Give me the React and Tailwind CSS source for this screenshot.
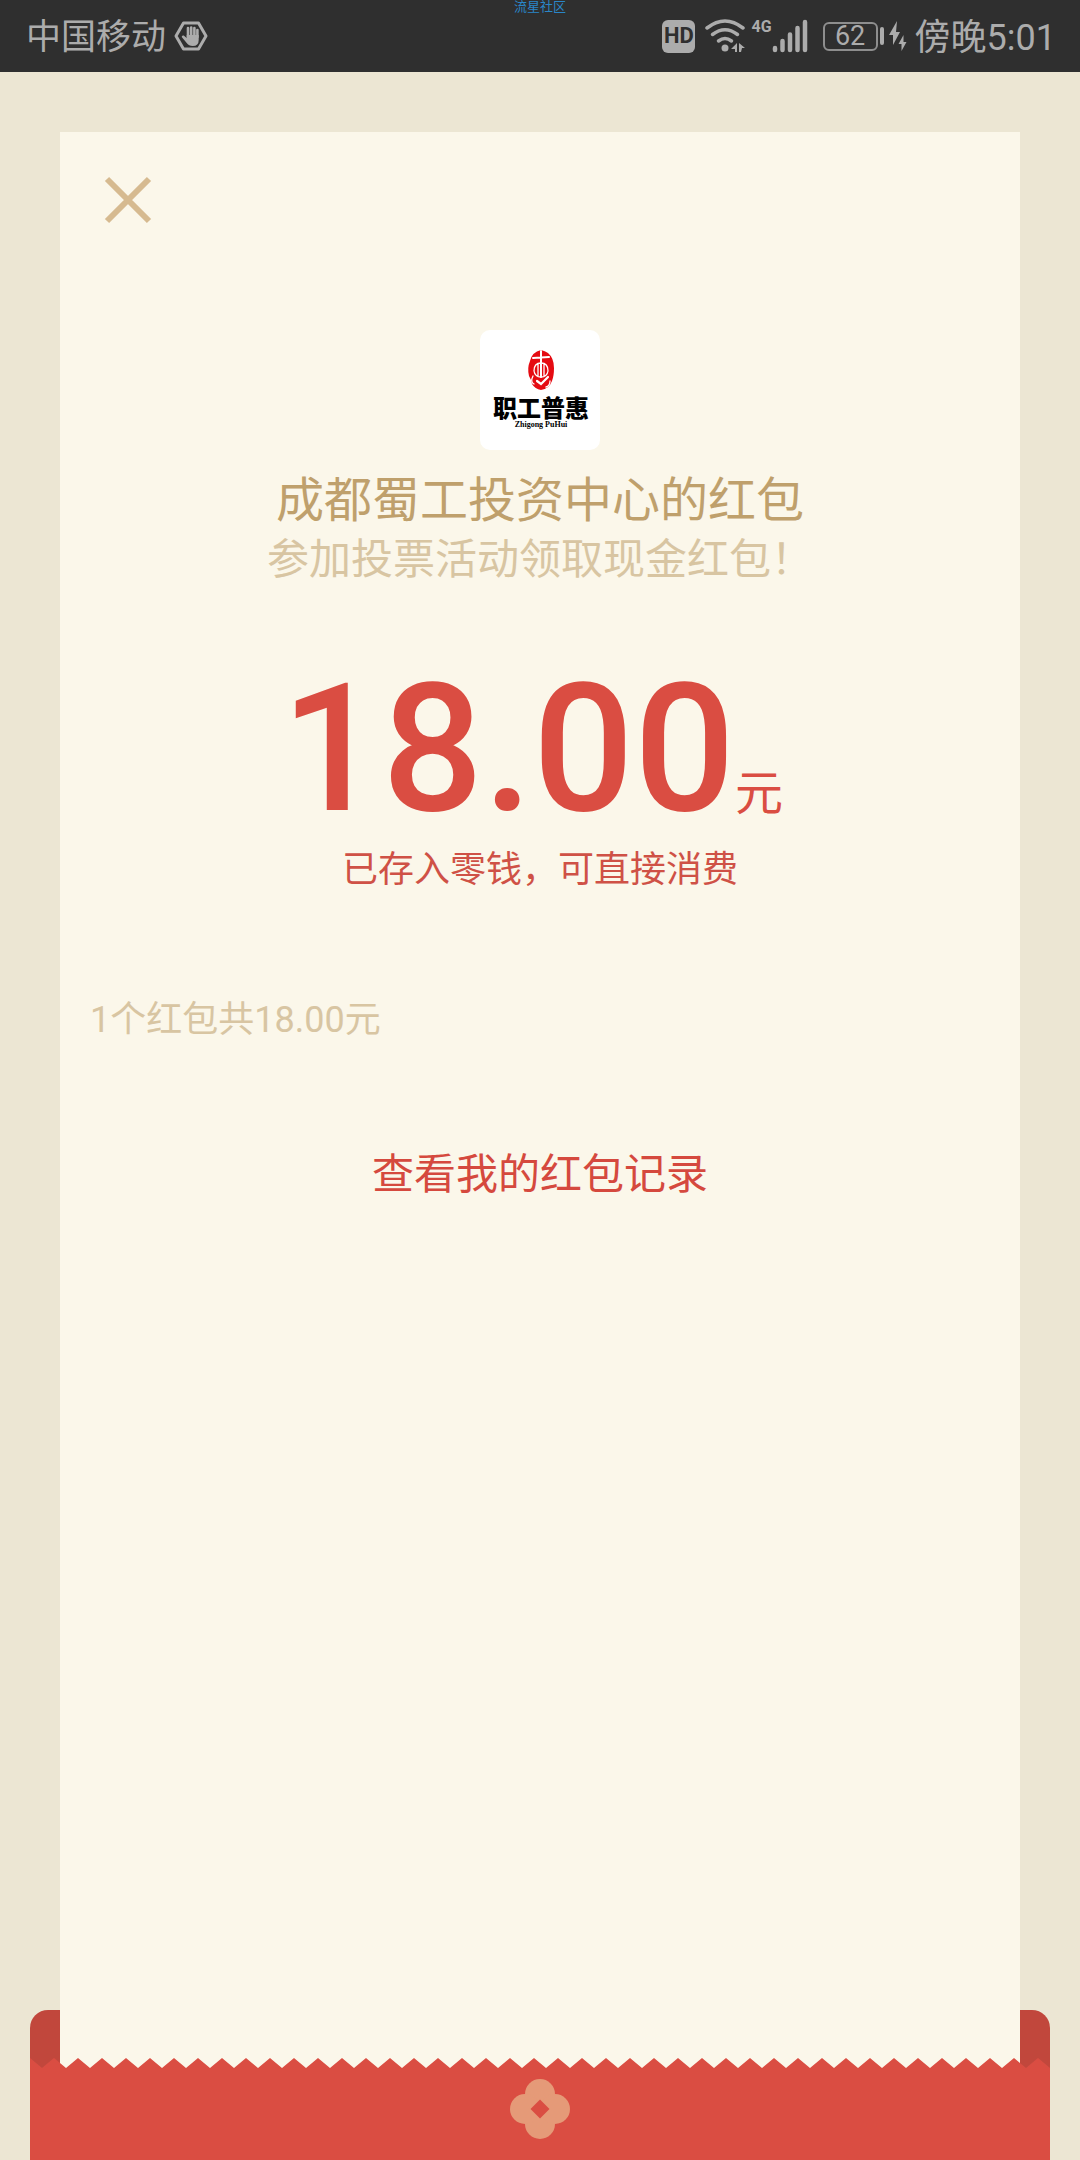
function HandIcon() {
  return (
    <svg className="w-[34px] h-[30px] text-[#acacac]" viewBox="0 0 34 30">
      <path d="M9.5 2h15L32 15l-7.500 13h-15L2 15z" fill="none" stroke="currentColor" strokeWidth="3" strokeLinejoin="round" />
      <path d="M14 16V7M17.200 15V6.500M20.400 15V7M23.400 16V9" stroke="currentColor" strokeWidth="2.600" strokeLinecap="round" />
      <path d="M12.700 14h12v5q0 6-6 6-4 0-6-3l-5-6q0-2 2-1.500l3 2.500z" fill="currentColor" />
    </svg>
  )
}

function WifiIcon() {
  return (
    <svg className="w-10 h-[34px] text-[#acacac]" viewBox="0 0 40 34">
      <g fill="none" stroke="currentColor" strokeWidth="3.500" strokeLinecap="round">
        <path d="M2 9Q20-5 38 9" />
        <path d="M7.500 15.500Q20 6 32.500 15.500" />
        <path d="M13.500 22Q20 17 26.500 22" />
      </g>
      <circle cx="20" cy="29" r="3.500" fill="currentColor" />
      <path d="M32 24v9h-2v-3h-4zM34 24l6 5h-3l-1 4h-2z" fill="currentColor" />
    </svg>
  )
}

function SignalIcon() {
  return (
    <svg className="w-[36px] h-[34px] text-[#acacac]" viewBox="0 0 36 34">
      <g stroke="currentColor" strokeWidth="4.500" strokeLinecap="round">
        <path d="M3 29v2M10.500 22v9M18 15.500V31M25.500 9v22M33 3v28" />
      </g>
    </svg>
  )
}

function BatteryIcon() {
  return (
    <div className="flex items-center text-[#acacac]">
      <span className="flex h-[29px] w-[55px] items-center justify-center rounded-md border-2 border-[#8e8e8e] text-[27px] leading-none">
        62
      </span>
      <span className="ml-[2px] h-[18px] w-1 rounded-full bg-[#acacac]" />
      <svg className="ml-[5px] w-[18px] h-[30px]" viewBox="0 0 18 30">
        <path d="M8 0 0 14h4l0 10 7-13H7z" fill="currentColor" />
        <path d="M14.500 14 9.500 23h3l0 7 5-9h-3z" fill="currentColor" />
      </svg>
    </div>
  )
}

function StatusBar() {
  return (
    <header className="relative flex h-[72px] items-center justify-between bg-[#2f2f2f] pl-[26px] pr-6 text-[#acacac]">
      <div className="flex items-center gap-2">
        <span className="pt-1 text-[35px]">中国移动</span>
        <HandIcon />
      </div>
      <span className="absolute inset-x-0 top-0 text-center text-[13px] leading-[13px] text-[#2a86c8]">流星社区</span>
      <div className="flex items-center">
        <span className="flex h-[33px] w-[33px] items-center justify-center rounded-md bg-[#acacac] text-[22px] font-bold leading-none text-[#2f2f2f]">
          HD
        </span>
        <span className="ml-[10px]"><WifiIcon /></span>
        <span className="ml-[6px] self-start pt-3 text-[16px] font-bold leading-none">4G</span>
        <SignalIcon />
        <span className="ml-[15px]"><BatteryIcon /></span>
        <span className="ml-2 pt-1 text-[36px]">傍晚5:01</span>
      </div>
    </header>
  )
}

function SenderLogo() {
  return (
    <svg className="h-[120px] w-[120px] rounded-[10px] bg-white" viewBox="0 0 120 120" role="img" aria-label="职工普惠">
      <path d="M61 20q4 1 7 3 6 5 6 15 0 8-2 13-3 8-11 9-6-1-9-6-1-5-3-8-2-8 1-15 2-9 11-11z" fill="#e50b12" />
      <g fill="none" stroke="#fff" strokeLinecap="round">
        <path d="M53 28l16-1M61 21v26" strokeWidth="2" />
        <path d="M54 41q0-8 7-8t7 8q-1 6-7 6t-7-6M58 34v12M64 34v12M53 46q-3 6 1 8M70 51q0 5-4 6" strokeWidth="1.300" />
        <path d="M57 51l4 3 7-7" strokeWidth="2.200" />
      </g>
      <text x="61" y="87" textAnchor="middle" fontSize="24" fontWeight="900">职工普惠</text>
      <text x="61" y="97" textAnchor="middle" fontSize="8" fontWeight="700" fontFamily="Liberation Serif, serif">Zhigong PuHui</text>
    </svg>
  )
}

function Envelope() {
  return (
    <footer className="-mt-[58px]">
      <div className="h-[58px] rounded-t-[18px] bg-[#c1473c]" />
      <div className="relative z-20 -mt-[10px]">
        <svg className="block h-[10px] w-full">
          <defs>
            <pattern id="teeth" width="24" height="10" patternUnits="userSpaceOnUse">
              <path d="M0 0l12 10L24 0v10H0z" fill="#da4d42" />
            </pattern>
          </defs>
          <rect width="100%" height="10" fill="url(#teeth)" />
        </svg>
        <div className="flex justify-center bg-[#da4d42] pb-[21px] pt-[11px]">
          <svg className="h-[60px] w-[60px]" viewBox="0 0 60 60">
            <g fill="#e59a78">
              <circle cx="30" cy="15" r="15" />
              <circle cx="30" cy="45" r="15" />
              <circle cx="15" cy="30" r="15" />
              <circle cx="45" cy="30" r="15" />
            </g>
            <path d="M30 20.500l9.500 9.500-9.500 9.500-9.500-9.500z" fill="#da4d42" />
          </svg>
        </div>
      </div>
    </footer>
  )
}

export default function App() {
  return (
    <div className="flex min-h-screen flex-col bg-[#ece6d3] font-[Roboto,'Noto_Sans_CJK_SC',sans-serif]">
      <StatusBar />
      <div className="flex flex-1 flex-col px-[30px] pt-[60px]">
        <main className="relative z-10 mx-[30px] flex flex-1 flex-col bg-[#fbf7ea] px-[30px] pb-20">
          <button type="button" aria-label="关闭" className="mt-[44px] ml-[14px] w-12 text-[#d6ba90]">
            <svg className="h-12 w-12" viewBox="0 0 48 48">
              <path d="M3 3l42 42M45 3L3 45" stroke="currentColor" strokeWidth="6" />
            </svg>
          </button>

          <section className="mt-[106px] flex flex-col items-center">
            <SenderLogo />
            <h1 className="mt-[15px] text-[48px] leading-[72px] text-[#bfa06c]">成都蜀工投资中心的红包</h1>
            <p className="text-[42px] leading-[46px] text-[#d8c5a2]">参加投票活动领取现金红包！</p>
            <p className="mt-[72px] flex items-baseline pr-4 text-[#da4d42]">
              <span className="text-[178px] font-medium leading-[188px]">18.00</span>
              <span className="text-[48px] leading-none">元</span>
            </p>
            <p className="text-[36px] leading-[54px] text-[#cf5146]">已存入零钱，可直接消费</p>
          </section>

          <p className="mt-[96px] text-[36px] leading-[54px] text-[#d8c5a2]">1个红包共18.00元</p>
          <a href="#records" className="mt-[96px] self-center text-[42px] leading-[63px] text-[#d5493e]">
            查看我的红包记录
          </a>
        </main>
        <Envelope />
      </div>
    </div>
  )
}
